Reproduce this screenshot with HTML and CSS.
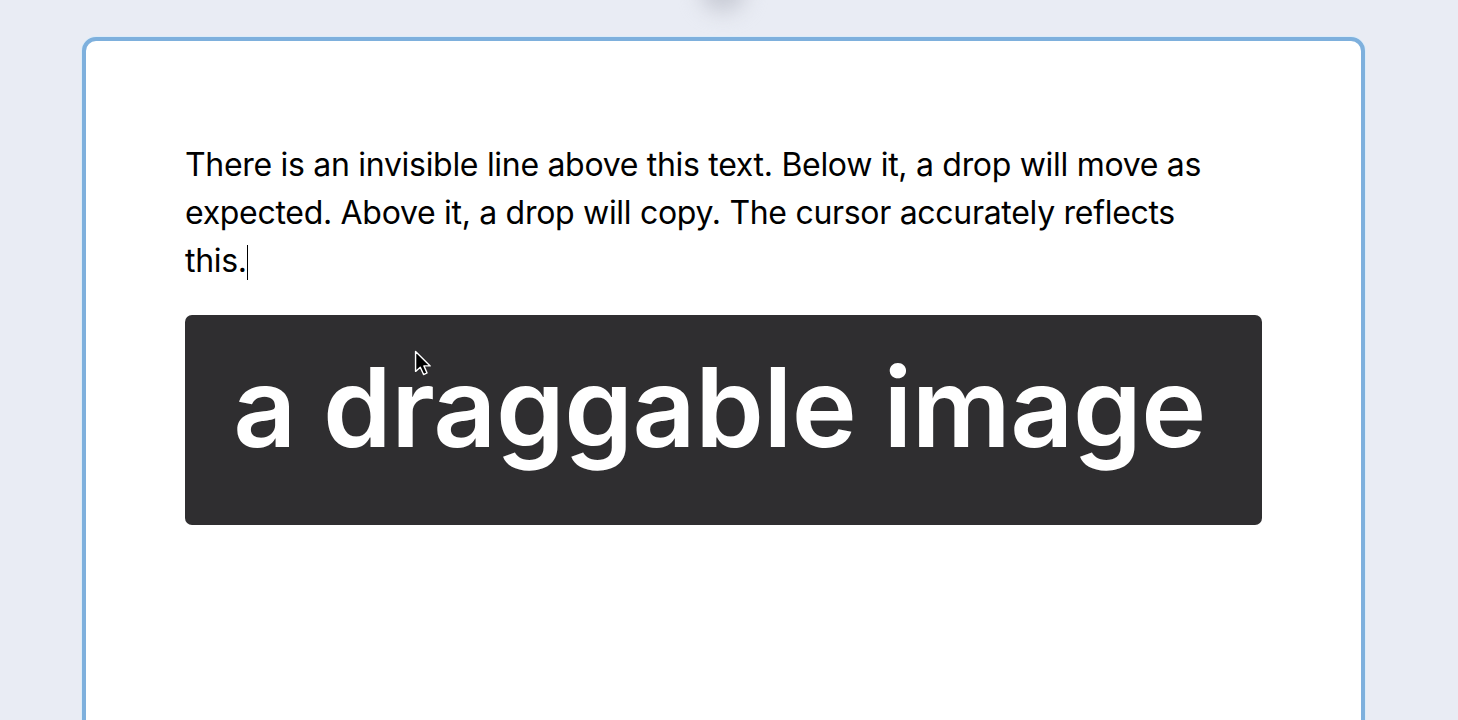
FILE: index.html
```html
<!DOCTYPE html>
<html lang="en">

<head>
    <meta charset="UTF-8">
    <meta name="viewport" content="width=device-width, initial-scale=1.0">
    <title>Drag and drop</title>
    <link rel="stylesheet" href="styles.css">
</head>

<body>
    <div class="blob"></div>

    <div class="editor">
        <p class="para">There is an invisible line above this text. Below it, a drop will move as expected. Above it, a
            drop will copy. The cursor accurately reflects this.<span class="caret"></span></p>

        <div class="picture">
            <span class="picture-text">a draggable image</span>
            <svg class="pointer" width="22" height="26" viewBox="0 0 14 16.5">
                <path d="M1 1 L1 13.6 L4 10.9 L6.1 15.6 L8.3 14.6 L6.3 10.1 L10.3 10.1 Z" fill="#000"
                    stroke="#fff" stroke-width="0.9" stroke-linejoin="round" />
            </svg>
        </div>
    </div>
</body>

</html>
```

FILE: styles.css
```css
html,
body {
    height: 100%;
}

body {
    margin: 0;
    background-color: #e9ecf4;
    font-family: Inter, "Liberation Sans", sans-serif;
    overflow: hidden;
    position: relative;
}

.blob {
    position: absolute;
    left: 700px;
    top: -28px;
    width: 46px;
    height: 40px;
    border-radius: 50%;
    background-color: #c9ccd6;
    filter: blur(10px);
}

.editor {
    margin: 37px 0 0 82px;
    width: 1283px;
    min-height: 720px;
    box-sizing: border-box;
    padding: 100px 99px 100px 99px;
    background-color: #fff;
    border: 4px solid #7eb0dd;
    border-radius: 14px;
    box-shadow: 0 0 0 1px #dcecf9;
}

.para {
    margin: 0;
    max-width: 1045px;
    font-size: 32px;
    line-height: 48px;
    color: #000;
    letter-spacing: -0.3px;
}

.caret {
    display: inline-block;
    width: 1px;
    height: 35px;
    background-color: #000;
    vertical-align: -8px;
}

.picture {
    position: relative;
    margin-top: 30px;
    height: 210px;
    background-color: #2f2e30;
    border-radius: 7px;
    display: flex;
    align-items: center;
    justify-content: center;
}

.picture-text {
    color: #fff;
    font-weight: 600;
    font-size: 110px;
    letter-spacing: -0.5px;
    line-height: 1;
    margin: -26px 0 0 -8px;
}

.pointer {
    position: absolute;
    left: 229px;
    top: 35px;
}
```
